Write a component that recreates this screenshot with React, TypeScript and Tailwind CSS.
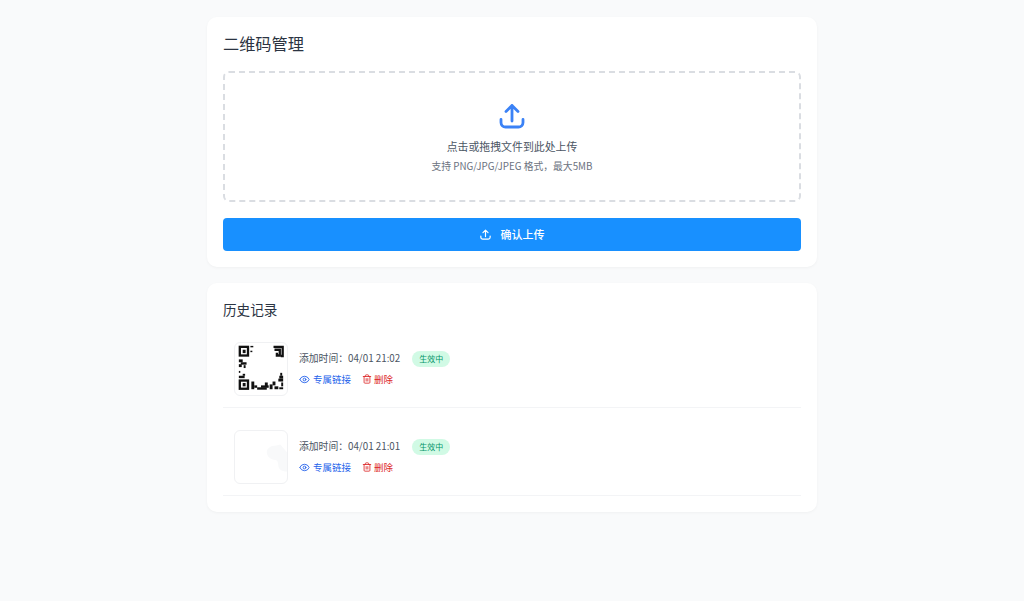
import { Eye, Trash2 } from "lucide-react";

const records = [
  { time: "04/01 21:02", qr: true },
  { time: "04/01 21:01", qr: false },
];

const UploadIcon = ({ className }: { className: string }) => (
  <svg viewBox="0 0 26 26" fill="none" stroke="currentColor" strokeLinecap="round" strokeLinejoin="round" className={className}>
    <path d="M13 2.500v15.500M7 8.500 13 2.500l6 6" strokeWidth="2.800" />
    <path d="M2 16.500v3A4.500 4.500 0 0 0 6.500 24h13a4.500 4.500 0 0 0 4.500-4.500v-3" strokeWidth="2.800" />
  </svg>
);

// the scanned code in the first row, with its middle washed out
const QrThumb = () => (
  <svg viewBox="0 0 54 54" className="h-full w-full">
    <g fill="none" stroke="#111" strokeWidth="2.400">
      <rect x="5" y="4" width="8.500" height="9" />
      <rect x="5" y="39" width="8.500" height="8.500" />
      <path d="M40 4h9.500v9.500h-2" />
      <path d="M41 7h5.500v6h-3v-3" />
    </g>
    <rect x="8" y="7" width="3" height="3.500" fill="#111" />
    <rect x="8" y="41.500" width="3" height="3.500" fill="#111" />
    <g fill="#111">
      <rect x="16" y="3" width="3" height="1.500" />
      <rect x="16" y="8" width="2" height="1.500" />
      <rect x="4" y="17" width="4" height="3" />
      <rect x="6" y="20" width="6" height="2.500" />
      <rect x="4" y="22" width="3" height="3" />
      <rect x="9" y="23" width="2" height="3" />
      <rect x="4" y="29" width="1.500" height="2" />
      <rect x="4" y="34" width="6" height="2.500" />
      <rect x="8" y="32" width="2.500" height="2" />
      <rect x="47" y="31" width="2" height="3" />
      <rect x="46" y="34" width="4" height="3" />
      <rect x="45" y="37" width="5" height="3" />
      <rect x="48" y="41" width="2" height="4" />
      <rect x="17" y="40" width="3" height="8" />
      <rect x="20" y="44" width="3" height="2.500" />
      <rect x="23" y="46" width="10" height="2.500" />
      <rect x="27" y="44" width="8" height="2.500" />
      <rect x="31" y="41" width="3" height="4" />
      <rect x="36" y="43" width="3" height="5" />
      <rect x="39" y="40" width="3" height="4" />
      <rect x="41" y="45" width="4" height="3" />
      <rect x="46" y="46" width="4" height="2" />
    </g>
  </svg>
);

const FadedThumb = () => (
  <svg viewBox="0 0 54 54" className="h-full w-full">
    <path d="M47 14 43 15c-6 0-10 3-10 7s4 8 9 8c2 0 3 3 3 6s3 6 9 6V22z" fill="#f8f9fa" />
  </svg>
);

export default function App() {
  return (
    <div className="min-h-[601px] bg-[#f9fafb] pt-[17px] font-['Noto_Sans_CJK_SC','Liberation_Sans',sans-serif]">
      <div className="mx-auto flex w-[610px] flex-col gap-4">
        <section className="rounded-[10px] bg-white p-4 shadow-[0_1px_3px_rgba(0,0,0,0.04)]">
          <h1 className="mb-[18px] text-[16.2px] leading-5 font-normal text-[#2b3442]">二维码管理</h1>
          <div className="flex h-[131px] flex-col items-center rounded-md border-2 border-dashed border-[#dadde2] pt-[30px]">
            <UploadIcon className="h-[26px] w-[26px] text-[#3b82f6]" />
            <p className="mt-[9px] text-[10.9px] leading-4 text-[#4b5563]">点击或拖拽文件到此处上传</p>
            <p className="mt-[5px] text-[9.8px] leading-[14px] text-[#6b7280]">支持 PNG/JPG/JPEG 格式，最大5MB</p>
          </div>
          <button className="mt-4 flex h-[33px] w-full items-center justify-center gap-[10px] rounded bg-[#1890ff] text-[11px] font-medium text-white">
            <UploadIcon className="h-[11px] w-[11px]" />
            确认上传
          </button>
        </section>

        <section className="rounded-[10px] bg-white px-4 pt-4 pb-4 shadow-[0_1px_3px_rgba(0,0,0,0.04)]">
          <h2 className="text-[13.6px] leading-5 font-normal text-[#2b3442]">历史记录</h2>
          <ul className="mt-[23px]">
            {records.map((r, i) => (
              <li key={r.time} className={`flex items-center gap-[11px] border-b border-[#f3f4f6] pr-2 pb-[11px] pl-[11px] ${i > 0 ? "mt-[22px]" : ""}`}>
                <div className="h-[54px] w-[54px] shrink-0 overflow-hidden rounded-md border border-[#f0f1f3] bg-white">
                  {r.qr ? <QrThumb /> : <FadedThumb />}
                </div>
                <div className="pb-[2px]">
                  <div className="flex items-center gap-[12px]">
                    <span className="text-[9.8px] leading-[14px] text-[#4b5563]">添加时间：{r.time}</span>
                    <span className="translate-y-px rounded-full bg-[#d1fae5] px-[7px] py-px text-[8px] leading-[14px] text-[#059669]">生效中</span>
                  </div>
                  <div className="mt-[6px] flex items-center gap-[11px] text-[9.5px] leading-[14px]">
                    <a className="flex items-center gap-[3px] text-[#2563eb]">
                      <Eye className="h-[11px] w-[11px]" />
                      专属链接
                    </a>
                    <a className="flex items-center gap-[2px] text-[#dc2626]">
                      <Trash2 className="h-[10px] w-[10px]" />
                      删除
                    </a>
                  </div>
                </div>
              </li>
            ))}
          </ul>
        </section>
      </div>
    </div>
  );
}
